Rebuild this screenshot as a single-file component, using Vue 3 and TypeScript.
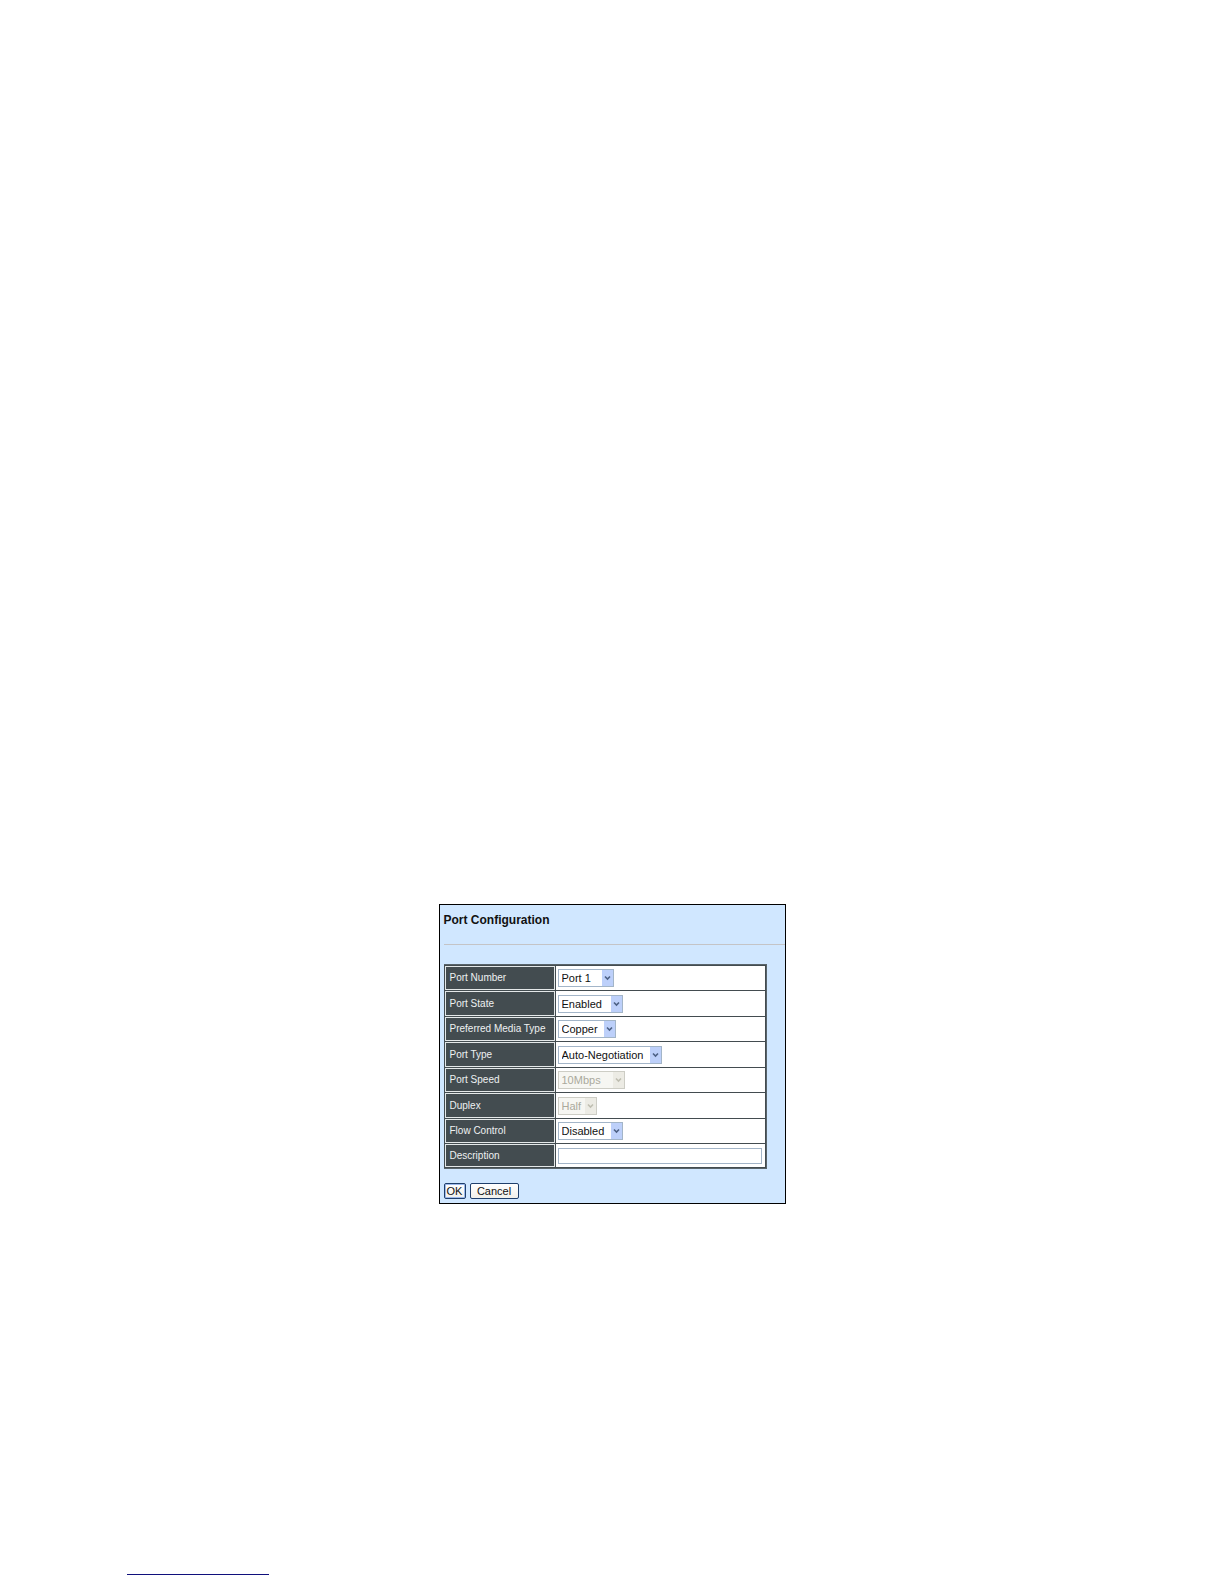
<script setup lang="ts">
import { reactive } from 'vue'

interface Field {
  id: string
  label: string
  width: number
  options?: string[]
  disabled?: boolean
}

const fields: Field[] = [
  { id: 'port-number', label: 'Port Number', width: 56, options: ['Port 1'] },
  { id: 'port-state', label: 'Port State', width: 65, options: ['Enabled', 'Disabled'] },
  { id: 'media-type', label: 'Preferred Media Type', width: 58, options: ['Copper', 'Fiber'] },
  { id: 'port-type', label: 'Port Type', width: 104, options: ['Auto-Negotiation', 'Manual'] },
  { id: 'port-speed', label: 'Port Speed', width: 67, options: ['10Mbps', '100Mbps'], disabled: true },
  { id: 'duplex', label: 'Duplex', width: 39, options: ['Half', 'Full'], disabled: true },
  { id: 'flow-control', label: 'Flow Control', width: 65, options: ['Disabled', 'Enabled'] },
  { id: 'description', label: 'Description', width: 204 },
]

const values = reactive<Record<string, string>>(
  Object.fromEntries(fields.map((f) => [f.id, f.options ? f.options[0] : ''])),
)
</script>

<template>
  <div class="page">
    <main class="panel">
      <h1>Port Configuration</h1>
      <hr class="rule" />
      <form @submit.prevent>
        <table>
          <tbody>
            <tr v-for="field in fields" :key="field.id">
              <th scope="row"><label :for="field.id">{{ field.label }}</label></th>
              <td>
                <span class="control" :style="{ width: field.width + 'px' }">
                  <template v-if="field.options">
                    <select :id="field.id" v-model="values[field.id]" :disabled="field.disabled">
                      <option v-for="option in field.options" :key="option">{{ option }}</option>
                    </select>
                    <svg class="arrow" :class="{ off: field.disabled }" viewBox="0 0 11 16" aria-hidden="true">
                      <rect width="11" height="16" />
                      <path d="M3 6.5 5.5 9 8 6.5" />
                    </svg>
                  </template>
                  <input v-else :id="field.id" v-model="values[field.id]" type="text" />
                </span>
              </td>
            </tr>
          </tbody>
        </table>
        <div class="actions">
          <button type="submit" class="primary">OK</button>
          <button type="button">Cancel</button>
        </div>
      </form>
    </main>
    <hr class="footnote" />
  </div>
</template>

<style>
body {
  margin: 0;
  background: #fff;
}
</style>

<style scoped>
.page {
  display: flex;
  flex-direction: column;
  align-items: center;
  box-sizing: border-box;
  padding: 904px 127px 8px;
  font-family: "Liberation Sans", Arial, sans-serif;
  color: #111;
}

.panel {
  box-sizing: border-box;
  width: 100%;
  max-width: 347px;
  padding: 7px 0 4px 4px;
  border: 1px solid #000;
  background: #d0e7ff;
}

h1 {
  margin: 0;
  font-size: 12px;
  line-height: 16px;
  font-weight: 700;
}

.rule {
  height: 1px;
  margin: 16px 0 19px;
  border: 0;
  background: #c4c4c6;
}

form {
  display: flow-root;
}

table {
  width: 323px;
  border: 1px solid #59646a;
  border-left: 0;
  border-spacing: 1px;
  background: #434c50;
}

th,
td {
  box-sizing: border-box;
  height: 24px;
  padding: 0 0 0 2px;
  line-height: 0;
}

tr:nth-child(even) > * {
  height: 25px;
}

tr:last-child > * {
  height: 23px;
}

th {
  width: 110px;
  padding-left: 4px;
  border: 1px solid #e4e8e9;
  background: #434c50;
  color: #eef1f2;
  font-size: 10px;
  font-weight: 400;
  text-align: left;
  white-space: nowrap;
}

th label {
  display: block;
  line-height: 14px;
}

td {
  background: #fff;
}

.control {
  display: inline-flex;
  position: relative;
  vertical-align: middle;
}

select,
input {
  appearance: none;
  box-sizing: border-box;
  width: 100%;
  height: 18px;
  margin: 0;
  padding: 0 0 0 3px;
  border: 1px solid #a3b5c8;
  border-radius: 0;
  outline: 0;
  background: #fff;
  color: #111;
  font-family: inherit;
  font-size: 11px;
  line-height: 16px;
}

input {
  height: 16px;
}

select:disabled {
  border-color: #cdcdc5;
  background: #f6f6f2;
  color: #aaa99c;
  opacity: 1;
}

.arrow {
  position: absolute;
  top: 1px;
  right: 1px;
  width: 11px;
  height: 16px;
  pointer-events: none;
}

.arrow rect {
  fill: #bdd0fa;
}

.arrow path {
  fill: none;
  stroke: #4d6185;
  stroke-width: 1.6;
}

.arrow.off rect {
  fill: #ecebe4;
}

.arrow.off path {
  stroke: #bfbeb1;
}

.actions {
  display: flex;
  gap: 4px;
  margin-top: 14px;
}

button {
  box-sizing: border-box;
  width: 49px;
  height: 16px;
  padding: 0;
  border: 1px solid #1f3f6b;
  border-radius: 2px;
  background: linear-gradient(#fff, #f1f0ea);
  color: #111;
  font-family: inherit;
  font-size: 11px;
  line-height: 12px;
}

.primary {
  width: 22px;
  box-shadow: inset 0 0 0 1px #9db9ec;
}

.footnote {
  align-self: flex-start;
  width: 142px;
  height: 1px;
  margin: 370px 0 0;
  border: 0;
  background: #10107c;
}
</style>
